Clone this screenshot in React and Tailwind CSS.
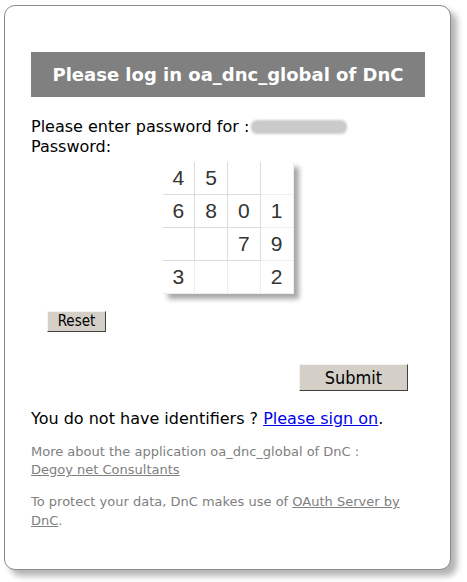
import React from 'react';

const rows = [
  ['4', '5', '', ''],
  ['6', '8', '0', '1'],
  ['', '', '7', '9'],
  ['3', '', '', '2'],
];

const Keypad = () => {
  return (
    <div className="mx-auto mt-[5px] grid w-[131px] grid-cols-4 bg-white shadow-[5px_5px_5px_rgba(0,0,0,0.35)] font-['Liberation_Sans',Arial,sans-serif]">
      {rows.map((row, r) =>
        row.map((d, c) => (
          <div
            key={`${r}-${c}`}
            className={`flex h-[33px] items-center justify-center text-[21px] text-[#333] ${c < 3 ? 'border-r border-[#dcdcdc]' : 'border-r border-[#eeeeee]'} ${r < 3 ? 'border-b border-[#dcdcdc]' : 'border-b border-[#eeeeee]'}`}
          >
            {d}
          </div>
        ))
      )}
    </div>
  );
};

const App = () => {
  return (
    <div className="h-[582px] w-[467px] bg-white pl-[4px] pt-[5px] font-['DejaVu_Sans',sans-serif]">
      <div className="h-[565px] w-[447px] rounded-[11px] border border-[#8a8a8a] bg-white pl-[26px] pr-[25px] pt-[46px] shadow-[6px_6px_6px_rgba(0,0,0,0.3)]">
        <div className="flex h-[45px] items-center justify-center bg-[#808080] text-[18px] font-bold text-white">
          Please log in oa_dnc_global of DnC
        </div>

        <div className="mt-[20px] text-[16px] leading-[20px] text-black">
          <div className="flex items-center">
            Please enter password for :
            <span className="ml-[2px] inline-block h-[14px] w-[96px] rounded-[6px] bg-[#cacaca] blur-[1px]"></span>
          </div>
          <div>Password:</div>
        </div>

        <Keypad />

        <div className="mt-[15px] pl-[16px]">
          <button className="h-[21px] w-[59px] border border-t-[#f4f3ef] border-l-[#f4f3ef] border-b-[#404040] border-r-[#404040] bg-[#d4d0c8] font-['DejaVu_Sans_Condensed','DejaVu_Sans',sans-serif] text-[15px] leading-none text-black">
            Reset
          </button>
        </div>

        <div className="mt-[31px] flex justify-end pr-[17px]">
          <button className="h-[27px] w-[109px] border border-t-[#f4f3ef] border-l-[#f4f3ef] border-b-[#404040] border-r-[#404040] bg-[#d4d0c8] font-['DejaVu_Sans_Condensed','DejaVu_Sans',sans-serif] text-[18px] leading-none text-black">
            Submit
          </button>
        </div>

        <p className="mt-[18px] text-[16px] leading-[20px] text-black">
          You do not have identifiers ? <a href="#" className="text-[#0000ee] underline">Please sign on</a>.
        </p>

        <p className="mt-[14px] text-[13px] leading-[18px] text-[#808080]">
          More about the application oa_dnc_global of DnC :<br />
          <a href="#" className="underline">Degoy net Consultants</a>
        </p>

        <p className="mt-[13px] text-[13px] leading-[19px] text-[#808080]">
          To protect your data, DnC makes use of <a href="#" className="underline">OAuth Server by DnC</a>.
        </p>
      </div>
    </div>
  );
};

export default App;
